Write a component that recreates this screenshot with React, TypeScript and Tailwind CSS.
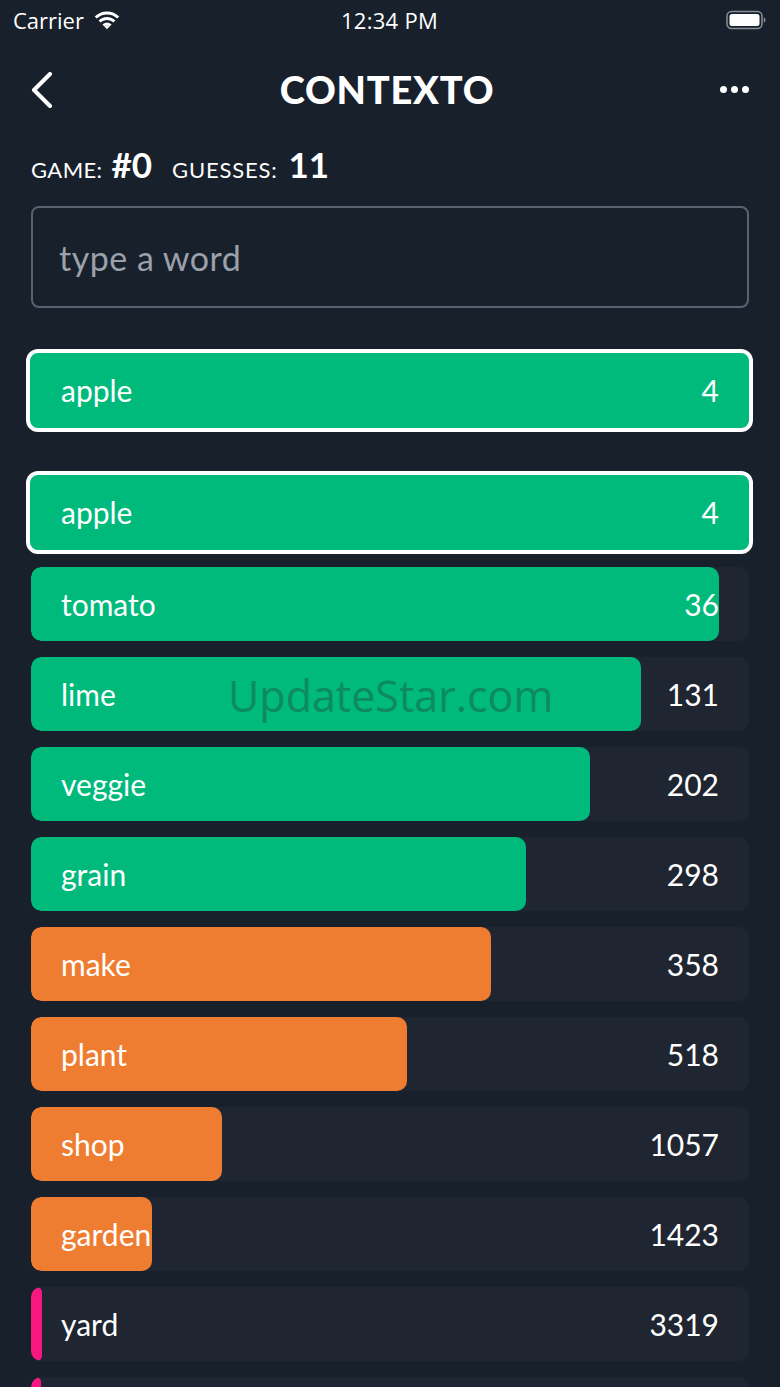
import React from 'react';

type Guess = { word: string; rank: number | null; pct: number; color: string };

const guesses: Guess[] = [
  { word: 'tomato', rank: 36, pct: 95.8, color: 'bg-[#00ba7c]' },
  { word: 'lime', rank: 131, pct: 85, color: 'bg-[#00ba7c]' },
  { word: 'veggie', rank: 202, pct: 77.9, color: 'bg-[#00ba7c]' },
  { word: 'grain', rank: 298, pct: 69, color: 'bg-[#00ba7c]' },
  { word: 'make', rank: 358, pct: 64, color: 'bg-[#ef7d31]' },
  { word: 'plant', rank: 518, pct: 52.4, color: 'bg-[#ef7d31]' },
  { word: 'shop', rank: 1057, pct: 26.6, color: 'bg-[#ef7d31]' },
  { word: 'garden', rank: 1423, pct: 16.9, color: 'bg-[#ef7d31]' },
  { word: 'yard', rank: 3319, pct: 1.6, color: 'bg-[#f91880]' },
  // last row is cut by the bottom of the screen
  { word: '', rank: null, pct: 1.4, color: 'bg-[#f91880]' },
];

const font = { fontFamily: 'Lato, "Open Sans", sans-serif' };

const Highlight = ({ word, rank }: { word: string; rank: number }) => (
  <div className="-ml-[5px] -mr-[4px] h-[83px] rounded-[12px] border-[4px] border-white bg-[#00ba7c] flex items-center justify-between pl-[31px] pr-[30px] text-white text-[30px]">
    <span>{word}</span>
    <span>{rank}</span>
  </div>
);

const Row = ({ g }: { g: Guess }) => (
  <div className="relative h-[74px] rounded-[10px] bg-[#1f2631] overflow-hidden flex items-center justify-between px-[30px] text-white text-[30px]">
    <div className={`absolute left-0 top-0 bottom-0 rounded-[10px] ${g.color}`} style={{ width: `${g.pct}%` }} />
    <span className="relative">{g.word}</span>
    <span className="relative">{g.rank}</span>
  </div>
);

export default function App() {
  return (
    <div className="w-[780px] h-[1387px] overflow-hidden bg-[#18202c] text-white relative" style={font}>
      {/* status bar */}
      <div className="h-[40px] flex items-center justify-between pl-[13px] pr-[14px] text-[22px]" style={{ fontFamily: '"Open Sans", sans-serif' }}>
        <div className="flex items-center gap-[9px] w-[200px]">
          <span>Carrier</span>
          <svg width="28" height="21" viewBox="0 0 25 19">
            <path d="M12.5 4c3.6 0 6.9 1.4 9.3 3.7l1.8-1.9C20.7 3 16.8 1.3 12.5 1.3S4.3 3 1.4 5.8l1.8 1.9C5.6 5.4 8.9 4 12.5 4z" fill="white" />
            <path d="M12.5 9c2.2 0 4.3.9 5.8 2.3l1.8-1.9C18.1 7.5 15.4 6.3 12.5 6.3S6.9 7.5 4.9 9.4l1.8 1.9C8.2 9.9 10.3 9 12.5 9z" fill="white" />
            <path d="M12.5 13.8c1 0 1.9.4 2.5 1L12.5 17.5 10 14.8c.6-.6 1.5-1 2.5-1z" fill="white" />
            <path d="M12.5 11.5c1.6 0 3 .6 4.1 1.6l-1.7 1.8c-.6-.6-1.5-1-2.4-1s-1.8.4-2.4 1L8.4 13.1c1.1-1 2.5-1.6 4.1-1.6z" fill="white" />
          </svg>
        </div>
        <span className="tracking-[0.3px]">12:34 PM</span>
        <div className="w-[200px] flex justify-end">
          <svg width="40" height="20" viewBox="0 0 40 20">
            <rect x="1" y="1.5" width="35" height="17" rx="4.5" fill="none" stroke="#8a8f96" strokeWidth="1.5" />
            <rect x="3.5" y="4" width="30" height="12" rx="2.5" fill="white" />
            <path d="M37.8 7.5c1.2.3 1.7 1.3 1.7 2.5s-.5 2.2-1.7 2.5z" fill="#8a8f96" />
          </svg>
        </div>
      </div>

      {/* nav */}
      <div className="h-[100px] flex items-center justify-between px-[30px] pb-[1px]">
        <svg width="24" height="36" viewBox="0 0 24 36">
          <path d="M20 2L4 18l16 16" fill="none" stroke="white" strokeWidth="4" strokeLinecap="round" strokeLinejoin="round" />
        </svg>
        <span className="text-[38px] font-black tracking-[0.8px]">CONTEXTO</span>
        <div className="flex gap-[4px] w-[30px]">
          <span className="w-[7px] h-[7px] rounded-full bg-white" />
          <span className="w-[7px] h-[7px] rounded-full bg-white" />
          <span className="w-[7px] h-[7px] rounded-full bg-white" />
        </div>
      </div>

      <div className="px-[31px]">
        {/* game info */}
        <div className="flex items-baseline h-[48px] -mt-[2px]">
          <span className="text-[22px] tracking-[0.4px]">GAME:</span>
          <span className="text-[35px] font-bold ml-[9px]">#0</span>
          <span className="text-[22px] tracking-[0.8px] ml-[20px]">GUESSES:</span>
          <span className="text-[35px] font-bold ml-[11px]">11</span>
        </div>

        {/* input */}
        <div className="mt-[20px] h-[102px] rounded-[8px] border-2 border-[#596270] flex items-center px-[26px]">
          <span className="text-[34px] tracking-[0.5px] text-[#9aa1ab]">type a word</span>
        </div>

        <div className="mt-[41px]">
          <Highlight word="apple" rank={4} />
        </div>
        <div className="mt-[39px]">
          <Highlight word="apple" rank={4} />
        </div>

        <div className="mt-[13px] flex flex-col gap-[16px]">
          {guesses.map((g, i) => (
            <Row key={i} g={g} />
          ))}
        </div>
      </div>

      {/* watermark */}
      <div className="absolute left-[228px] top-[664px] text-[43px] text-[#0d8a5f] pointer-events-none" style={{ fontFamily: '"Open Sans", sans-serif' }}>
        UpdateStar.com
      </div>
    </div>
  );
}
